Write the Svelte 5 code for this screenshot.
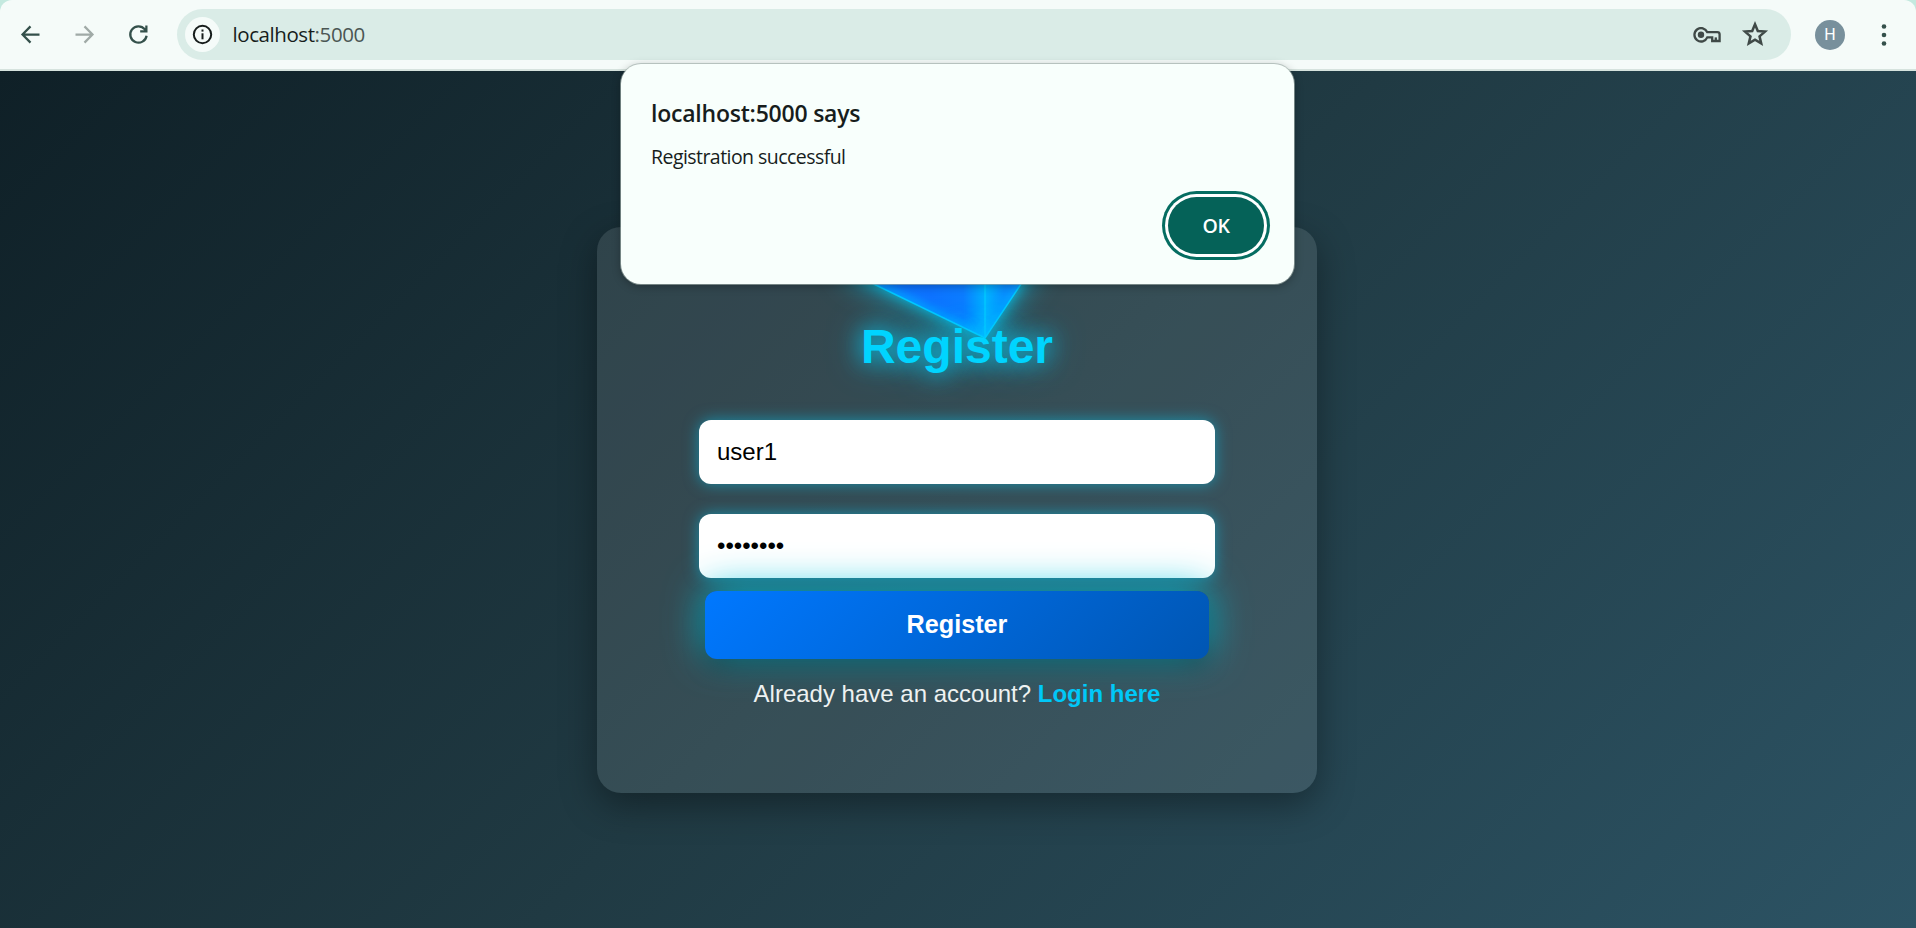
<script>
  let username = $state('user1');
  let password = $state('password');
</script>

<div class="window">
  <header class="toolbar">
    <nav>
      <svg viewBox="0 0 24 24"><path d="M20 12H5M12 4.8L4.9 12l7.1 7.2" /></svg>
      <svg class="muted" viewBox="0 0 24 24"><path d="M4 12h15M12 4.8l7.1 7.2-7.1 7.2" /></svg>
      <svg viewBox="0 0 24 24"><path d="M19.2 13.1A7.3 7.3 0 1 1 17.6 7.3L19 8.8M19 4v5.3h-5.5" /></svg>
    </nav>
    <div class="address">
      <span class="site">
        <svg viewBox="0 0 21 21"><circle cx="10.5" cy="10.5" r="8.7" /><path d="M10.5 9.3v6" /><path d="M10.5 5.5v2.1" /></svg>
      </span>
      <span class="url">localhost<span>:5000</span></span>
      <svg class="key" viewBox="0 0 28 16"><path d="M14.3 5.2H24.3Q26.6 5.2 26.6 7.5V14H19.2V10.4H14.3A6.7 6.7 0 1 1 14.3 5.2Z" /><circle cx="8" cy="7.8" r="3.2" /><path d="M22.8 14v-3.6" /></svg>
      <svg class="star" viewBox="0 0 24 24"><path d="M12 4l2.1 5 5.4.45-4.1 3.55 1.25 5.3L12 15.5l-4.65 2.8L8.6 13 4.5 9.45 9.9 9z" /></svg>
    </div>
    <span class="avatar">H</span>
    <svg class="dots" viewBox="0 0 6 24"><circle cx="3" cy="3.5" r="2.3" /><circle cx="3" cy="12" r="2.3" /><circle cx="3" cy="20.5" r="2.3" /></svg>
  </header>

  <main>
    <section class="card">
      <svg class="shape" viewBox="0 0 240 150">
        <defs>
          <linearGradient id="left" x1="0" x2="1" y1="0" y2="0">
            <stop offset="0" stop-color="#0a75ff" />
            <stop offset=".6" stop-color="#0d72ff" />
            <stop offset=".84" stop-color="#0c7cff" />
            <stop offset="1" stop-color="#00b0ff" />
          </linearGradient>
          <linearGradient id="right" x1="0" x2="1" y1="0" y2="0">
            <stop offset="0" stop-color="#00b5ff" />
            <stop offset=".34" stop-color="#078cff" />
            <stop offset=".6" stop-color="#0d7cff" />
            <stop offset="1" stop-color="#00a8ff" />
          </linearGradient>
          <clipPath id="outline"><path d="M30 43L166 109L222 25V0H30z" /></clipPath>
          <filter id="soft" x="-30%" y="-30%" width="160%" height="160%"><feGaussianBlur stdDeviation="5" /></filter>
        </defs>
        <path d="M30 43L166 109V0H30z" fill="url(#left)" />
        <path d="M166 109L222 25V0H166z" fill="url(#right)" />
        <g clip-path="url(#outline)">
          <path d="M30 43L166 109L222 25" fill="none" stroke="#00b4ff" stroke-width="6" filter="url(#soft)" />
        </g>
        <path d="M30 43L166 109L222 25M166 109V0" fill="none" stroke="#00c8ff" stroke-width="1.4" />
      </svg>
      <h1>Register</h1>
      <form onsubmit={(e) => e.preventDefault()}>
        <input type="text" bind:value={username} aria-label="Username" />
        <input type="password" bind:value={password} aria-label="Password" />
        <button>Register</button>
      </form>
      <p>Already have an account? <a href="#login">Login here</a></p>
    </section>
  </main>

  <div class="dialog" role="alertdialog">
    <h2>localhost:5000 says</h2>
    <div class="message">Registration successful</div>
    <button>OK</button>
  </div>
</div>

<style>
  :global(body) { margin: 0; background: #c4e9df; }
  * { box-sizing: border-box; }
  .window {
    position: relative;
    width: 1916px;
    height: 928px;
    overflow: hidden;
    display: flex;
    flex-direction: column;
    font-family: "Liberation Sans", Arial, sans-serif;
  }

  .toolbar {
    height: 71px;
    flex: none;
    display: flex;
    align-items: center;
    padding: 0 29px 0 17px;
    background: #f5fbf9;
    border-bottom: 2px solid #d6e3de;
    border-radius: 12px 12px 0 0;
    font-family: "Open Sans", "Noto Sans", sans-serif;
  }
  svg { display: block; fill: none; stroke: #34504b; stroke-width: 2; }
  nav { display: flex; gap: 27px; width: 160px; }
  nav svg { width: 27px; height: 27px; }
  nav .muted { stroke: #a0aaa7; }
  .address {
    width: 1614px;
    height: 51px;
    display: flex;
    align-items: center;
    padding: 0 24px 0 8px;
    border-radius: 26px;
    background: #daece7;
  }
  .site {
    width: 35px;
    height: 35px;
    border-radius: 50%;
    background: #f5fbf9;
    display: grid;
    place-items: center;
  }
  .site svg { width: 21px; height: 21px; stroke: #171d1c; }
  .url { flex: 1; margin-left: 12.5px; padding-bottom: 2px; font-size: 20.5px; letter-spacing: -0.42px; color: #171d1c; }
  .url span { color: #4b5653; }
  .key { width: 28px; height: 16px; stroke: #3f4947; stroke-width: 2.3; }
  .key circle { fill: #3f4947; stroke: none; }
  .star { width: 32px; height: 32px; margin: 0 -4px 0 18px; stroke: #3f4947; stroke-width: 1.9; }
  .avatar {
    width: 30px;
    height: 30px;
    margin-left: 24px;
    border-radius: 50%;
    background: #78909c;
    color: #fff;
    display: grid;
    place-items: center;
    font: 16px Roboto, sans-serif;
  }
  .dots { width: 6px; height: 24px; margin-left: auto; }
  .dots circle { fill: #34504b; stroke: none; }

  main {
    flex: 1;
    display: flex;
    justify-content: center;
    align-items: flex-start;
    padding: 156px 2px 0 0;
    background: linear-gradient(135deg, #0f2027, #203a43, #2c5364);
  }
  .card {
    position: relative;
    width: 720px;
    height: 566px;
    padding-top: 92px;
    border-radius: 24px;
    background: rgba(255, 255, 255, 0.1);
    box-shadow: 0 12px 36px rgba(0, 0, 0, 0.37);
    text-align: center;
  }
  .shape {
    position: absolute;
    left: 222px;
    top: 2px;
    width: 240px;
    height: 150px;
    overflow: visible;
    stroke: none;
    filter: drop-shadow(0 0 6px rgba(0, 212, 255, 0.55)) drop-shadow(0 0 15px rgba(0, 212, 255, 0.7));
  }
  h1 {
    position: relative;
    margin: 0;
    font-size: 48px;
    line-height: 55px;
    color: #00d4ff;
    text-shadow: 0 0 22px rgba(0, 212, 255, 0.8), 0 0 34px rgba(0, 212, 255, 0.7);
  }
  form { display: flex; flex-direction: column; align-items: center; padding-top: 46px; }
  input {
    width: 516px;
    height: 64px;
    margin-bottom: 30px;
    padding: 0 18px;
    border: 0;
    border-radius: 12px;
    outline: none;
    background: #fff;
    color: #000;
    font: 24px "Liberation Sans", Arial, sans-serif;
    box-shadow: 0 0 15px rgba(0, 212, 255, 0.5);
  }
  input[type="password"] { margin-bottom: 13px; }
  form button {
    position: relative;
    width: 504px;
    height: 68px;
    padding: 0 0 2px;
    border: 0;
    border-radius: 12px;
    background: linear-gradient(135deg, #0078ff, #0056b3);
    color: #fff;
    font: bold 25.2px "Liberation Sans", Arial, sans-serif;
    box-shadow: 0 10px 22px rgba(0, 0, 0, 0.27), 0 -3px 38px rgba(0, 198, 225, 0.9);
  }
  p { position: relative; margin: 21px 0 0; font-size: 24px; line-height: 28px; color: #eef2f2; }
  a { color: #00c8f8; font-weight: bold; text-decoration: none; }

  .dialog {
    position: absolute;
    left: 621px;
    top: 64px;
    width: 673px;
    height: 220px;
    padding: 31px 30px 0 30px;
    display: flex;
    flex-direction: column;
    border-radius: 20px;
    background: #f8fffc;
    box-shadow: 0 0 0 1px rgba(160, 175, 170, 0.65), 0 2px 10px rgba(0, 0, 0, 0.3);
    color: #171d1c;
    font-family: "Open Sans", "Noto Sans", sans-serif;
  }
  h2 { margin: 0; font-size: 23px; line-height: 36px; font-weight: 600; letter-spacing: -0.22px; }
  .message { margin-top: 12px; font-size: 19.5px; line-height: 28px; letter-spacing: -0.55px; }
  .dialog button {
    align-self: flex-end;
    width: 96px;
    height: 57px;
    margin: 26px 0 0;
    padding: 0;
    border: 0;
    border-radius: 29px;
    background: #056258;
    color: #fff;
    font: 600 19.5px "Open Sans", sans-serif;
    letter-spacing: -0.3px;
    box-shadow: 0 0 0 3px #fff, 0 0 0 6px #056d61;
  }
</style>
